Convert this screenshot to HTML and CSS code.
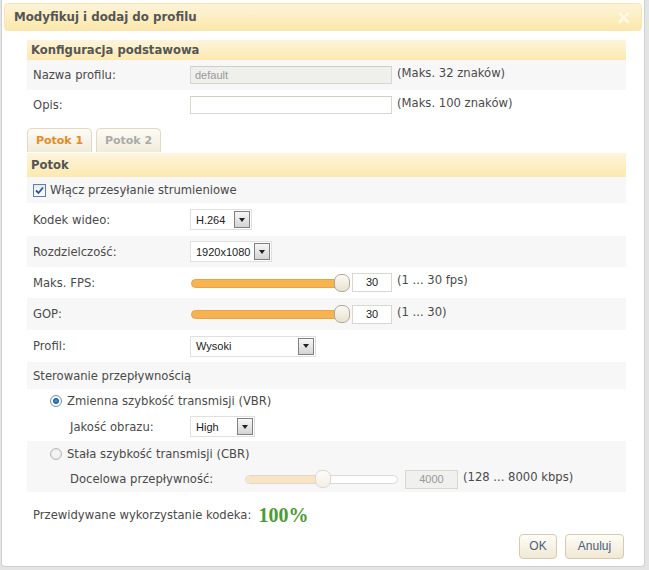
FILE: index.html
```html
<!doctype html>
<html lang="pl">
<head>
    <meta charset="UTF-8">
    <title>Modyfikuj i dodaj do profilu</title>
    <link rel="stylesheet" href="styles.css">
</head>
<body>
    <div class="dialog">
        <!--pasek tytułu-->
        <div class="titlebar">
            <span class="title">Modyfikuj i dodaj do profilu</span>
            <span class="close">&times;</span>
        </div>
        <div class="content">
            <!--konfiguracja podstawowa-->
            <div class="head">Konfiguracja podstawowa</div>
            <div class="row alt h30">
                <span class="lbl">Nazwa profilu:</span>
                <span class="txt off">default</span>
                <span class="note">(Maks. 32 znaków)</span>
            </div>
            <div class="row h30">
                <span class="lbl">Opis:</span>
                <span class="txt"></span>
                <span class="note">(Maks. 100 znaków)</span>
            </div>

            <!--zakładki-->
            <div class="tabs">
                <span class="tab active">Potok 1</span>
                <span class="tab">Potok 2</span>
            </div>

            <div class="head tall">Potok</div>
            <div class="row alt h26">
                <span class="check">
                    <svg width="9" height="9" viewBox="0 0 9 9"><path d="M1 4.5 L3.5 7 L8 1.5" fill="none" stroke="#2a55a0" stroke-width="1.8"/></svg>
                </span>
                <span>Włącz przesyłanie strumieniowe</span>
            </div>
            <div class="row h33">
                <span class="lbl">Kodek wideo:</span>
                <span class="sel w62"><span class="val">H.264</span><span class="arrow"><i></i></span></span>
            </div>
            <div class="row alt h31">
                <span class="lbl">Rozdzielczość:</span>
                <span class="sel w82"><span class="val">1920x1080</span><span class="arrow"><i></i></span></span>
            </div>
            <div class="row h31">
                <span class="lbl">Maks. FPS:</span>
                <span class="slider">
                    <span class="track"></span>
                    <span class="thumb" style="left: 143px"></span>
                </span>
                <span class="num">30</span>
                <span class="note">(1 ... 30 fps)</span>
            </div>
            <div class="row alt h32">
                <span class="lbl">GOP:</span>
                <span class="slider">
                    <span class="track"></span>
                    <span class="thumb" style="left: 143px"></span>
                </span>
                <span class="num">30</span>
                <span class="note">(1 ... 30)</span>
            </div>
            <div class="row h32">
                <span class="lbl">Profil:</span>
                <span class="sel w126"><span class="val">Wysoki</span><span class="arrow"><i></i></span></span>
            </div>
            <div class="row alt h27">
                <span>Sterowanie przepływnością</span>
            </div>
            <div class="row sub h23">
                <span class="radio on"></span>
                <span>Zmienna szybkość transmisji (VBR)</span>
            </div>
            <div class="row sub2 h29">
                <span class="lbl short">Jakość obrazu:</span>
                <span class="sel w65"><span class="val">High</span><span class="arrow"><i></i></span></span>
            </div>
            <div class="row alt sub h25">
                <span class="radio"></span>
                <span>Stała szybkość transmisji (CBR)</span>
            </div>
            <div class="row alt sub2 h26">
                <span class="lbl long">Docelowa przepływność:</span>
                <span class="slider dis">
                    <span class="track"><span class="fill" style="width: 75px"></span></span>
                    <span class="thumb" style="left: 70px"></span>
                </span>
                <span class="num wide off">4000</span>
                <span class="note">(128 ... 8000 kbps)</span>
            </div>

            <!--wykorzystanie kodeka-->
            <div class="usage">
                <span>Przewidywane wykorzystanie kodeka:</span>
                <span class="pct">100%</span>
            </div>

            <div class="actions">
                <span class="btn ok">OK</span>
                <span class="btn cancel">Anuluj</span>
            </div>
        </div>
    </div>
</body>
</html>
```

FILE: styles.css
```css
body{
    margin: 0;
    background: #e4e4e4;
    font-family: "DejaVu Sans", Verdana, sans-serif;
    font-size: 11.6px;
    color: #4a4a4a;
}
/*okno dialogu*/
.dialog{
    box-sizing: border-box;
    width: 644px;
    height: 567px;
    margin-left: 1px;
    padding: 3px 2px 0;
    background: #fff;
    border: 1px solid #d0d0d0;
    border-top: 0;
    border-radius: 0 0 4px 4px;
}
/*pasek tytułu*/
.titlebar{
    box-sizing: border-box;
    height: 28px;
    display: flex;
    align-items: center;
    justify-content: space-between;
    padding: 0 9px 0 9px;
    background: linear-gradient(#fdf4d8, #fce8ac);
    border: 1px solid #f7e5b2;
    border-radius: 4px;
}
.title{
    font-size: 11.8px;
    font-weight: bold;
    color: #555;
}
.close{
    font-size: 19px;
    font-weight: bold;
    color: #fff8e8;
}
.content{
    padding: 9px 16px 0 23px;
}
/*nagłówek sekcji*/
.head{
    height: 20px;
    line-height: 20px;
    padding-left: 4px;
    font-size: 11.6px;
    font-weight: bold;
    color: #555;
    background: linear-gradient(#fdf5dc, #fde9af);
}
.head.tall{
    height: 24px;
    line-height: 24px;
}
/*wiersze*/
.row{
    display: flex;
    align-items: center;
    padding-left: 6px;
}
.row.alt{
    background: #f7f7f7;
}
.row.sub{
    padding-left: 23px;
}
.row.sub2{
    padding-left: 43px;
}
.h23{ height: 23px; }
.h25{ height: 25px; }
.h26{ height: 26px; }
.h27{ height: 27px; }
.h29{ height: 29px; }
.h30{ height: 30px; }
.h31{ height: 31px; }
.h32{ height: 32px; }
.h33{ height: 33px; }

.lbl{
    width: 157px;
    flex: none;
}
.lbl.short{
    width: 120px;
}
.lbl.long{
    width: 175px;
}
.note{
    margin-left: 5px;
    margin-bottom: 5px;
}
/*pola tekstowe*/
.txt{
    box-sizing: border-box;
    width: 202px;
    height: 18px;
    line-height: 16px;
    padding: 0 4px;
    border: 1px solid #d8d8d0;
    border-top-color: #cfcfc6;
    background: #fff;
    font-family: "Liberation Sans", Arial, sans-serif;
    font-size: 11px;
    color: #999;
}
.txt.off{
    background: #efefec;
}
.num{
    box-sizing: border-box;
    width: 40px;
    height: 19px;
    line-height: 17px;
    margin-left: 2px;
    border: 1px solid #d8d8d0;
    background: #fff;
    text-align: center;
    font-family: "Liberation Sans", Arial, sans-serif;
    font-size: 11px;
    color: #222;
}
.num.wide{
    width: 53px;
    margin-left: 7px;
}
.num.off{
    background: #f0f0ee;
    color: #999;
}
/*zakładki*/
.tabs{
    display: flex;
    gap: 4px;
    margin-top: 8px;
    margin-bottom: 1px;
}
.tab{
    box-sizing: border-box;
    width: 65px;
    height: 24px;
    display: flex;
    align-items: center;
    justify-content: center;
    border: 1px solid #e2d9c2;
    border-bottom: 0;
    border-radius: 5px 5px 0 0;
    background: linear-gradient(#fdfbf6, #f2ebdb);
    font-size: 11px;
    font-weight: bold;
    color: #aaa;
}
.tab.active{
    color: #e08c28;
}
/*pole wyboru*/
.check{
    box-sizing: border-box;
    width: 13px;
    height: 13px;
    margin-right: 4px;
    display: flex;
    align-items: center;
    justify-content: center;
    border: 1px solid #5b7fae;
    background: linear-gradient(#e8e8e4, #fff);
}
.radio{
    box-sizing: border-box;
    width: 12px;
    height: 12px;
    margin-right: 5px;
    border-radius: 50%;
    border: 1px solid #b8b8b8;
    background: radial-gradient(circle, #f4f4f4 40%, #dcdcdc);
}
.radio.on{
    border-color: #7791b0;
    background: radial-gradient(circle, #5fa0d8 0, #1d5d9c 2.5px, #fff 3.5px, #e4e8ec);
}
/*lista rozwijana*/
.sel{
    box-sizing: border-box;
    height: 21px;
    display: flex;
    align-items: center;
    padding: 0 1px 0 5px;
    border: 1px solid #e0e0dc;
    background: #fff;
    font-family: "Liberation Sans", Arial, sans-serif;
    font-size: 11px;
    color: #222;
}
.sel .val{
    flex: 1;
}
.w62{ width: 62px; }
.w65{ width: 65px; }
.w82{ width: 82px; }
.w126{ width: 126px; }
.arrow{
    box-sizing: border-box;
    width: 16px;
    height: 17px;
    display: flex;
    align-items: center;
    justify-content: center;
    border: 1px solid #808080;
    background: linear-gradient(#f7f7f7, #d4d4d4);
}
.arrow i{
    width: 0;
    height: 0;
    border-left: 3.5px solid transparent;
    border-right: 3.5px solid transparent;
    border-top: 4px solid #222;
}
/*suwak*/
.slider{
    position: relative;
    width: 159px;
    height: 18px;
    margin-left: 1px;
}
.track{
    position: absolute;
    left: 0;
    top: 5px;
    box-sizing: border-box;
    width: 154px;
    height: 9px;
    border: 1px solid #e8a444;
    border-radius: 5px;
    background: #f6b350;
    overflow: hidden;
}
.thumb{
    position: absolute;
    top: 0;
    box-sizing: border-box;
    width: 16px;
    height: 18px;
    border: 1px solid #b2a892;
    border-radius: 7px;
    background: linear-gradient(#fbf9f3, #e8e2d2);
}
.slider.dis{
    width: 153px;
    margin-left: 0;
}
.slider.dis .track{
    width: 153px;
    border-color: #d8d8d8;
    background: #fff;
}
.slider.dis .fill{
    display: block;
    height: 100%;
    background: #fbe4c2;
}
.slider.dis .thumb{
    border-color: #ddd8cc;
    background: linear-gradient(#fdfcf9, #f3efe6);
}
/*wykorzystanie kodeka*/
.usage{
    display: flex;
    align-items: center;
    height: 20px;
    margin-top: 13px;
    padding-left: 6px;
}
.pct{
    margin-left: 7px;
    font-family: "Liberation Serif", "Times New Roman", serif;
    font-size: 20px;
    font-weight: bold;
    color: #4b9b36;
}
/*przyciski*/
.actions{
    display: flex;
    justify-content: flex-end;
    gap: 8px;
    margin-top: 9px;
    padding-right: 2px;
}
.btn{
    box-sizing: border-box;
    height: 25px;
    line-height: 23px;
    text-align: center;
    border: 1px solid #d6cbb2;
    border-radius: 4px;
    background: linear-gradient(#fffdf8, #f1e8d4);
    font-family: "Liberation Sans", Arial, sans-serif;
    font-size: 12px;
    color: #46627c;
}
.btn.ok{
    width: 38px;
}
.btn.cancel{
    width: 59px;
}
```
